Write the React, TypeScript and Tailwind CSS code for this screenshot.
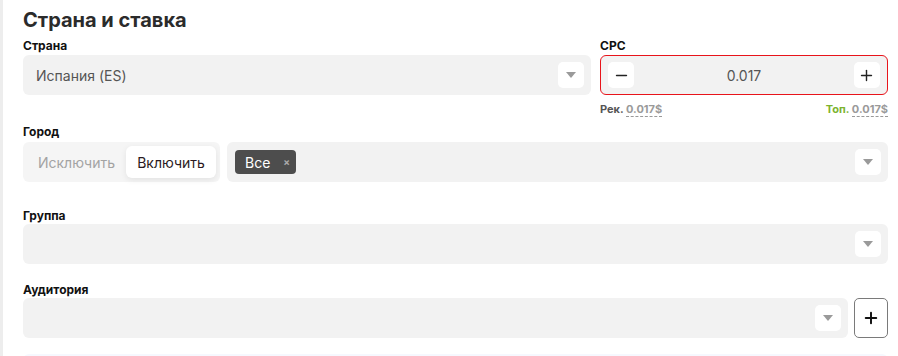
import { Minus, Plus } from "lucide-react";

const font = { fontFamily: "Inter, 'Noto Sans', sans-serif" };

function Caret() {
  return (
    <span className="flex h-[26px] w-[26px] items-center justify-center rounded-[5px] bg-white">
      <svg width="10" height="6" viewBox="0 0 10 6">
        <path d="M0 0h10L5 6z" fill="#9a9a9a" />
      </svg>
    </span>
  );
}

function Label({ children, className = "" }: { children: React.ReactNode; className?: string }) {
  return <div className={`h-4 text-[12px] leading-4 font-bold text-[#111] ${className}`}>{children}</div>;
}

function Select({ children, className = "" }: { children?: React.ReactNode; className?: string }) {
  return (
    <div className={`flex h-10 items-center rounded-[6px] bg-[#f2f2f2] pr-[7px] ${className}`}>
      <div className="flex min-w-0 flex-1 items-center">{children}</div>
      <Caret />
    </div>
  );
}

export default function App() {
  return (
    <div className="flex h-[356px] w-[898px] overflow-hidden bg-white" style={font}>
      <div className="w-[3px] shrink-0 bg-[#ededed]" />
      <div className="flex-1 pl-5 pr-[10px]">
        <h2 className="mt-2 h-6 text-[20px] leading-6 font-bold text-[#2b2b2b]">Страна и ставка</h2>

        <div className="mt-[6px] grid grid-cols-[568px_1fr] gap-x-[9px]">
          <div>
            <Label>Страна</Label>
            <Select className="mt-px">
              <span className="pl-[13px] text-[14px] text-[#555]">Испания (ES)</span>
            </Select>
          </div>
          <div>
            <Label>CPC</Label>
            <div className="mt-px flex h-10 items-center justify-between rounded-[6px] border border-[#e8141b] bg-[#f2f2f2] px-[7px]">
              <span className="flex h-[26px] w-[26px] items-center justify-center rounded-[5px] bg-white">
                <Minus size={17} strokeWidth={2} color="#222" />
              </span>
              <span className="text-[14px] text-[#555]">0.017</span>
              <span className="flex h-[26px] w-[26px] items-center justify-center rounded-[5px] bg-white">
                <Plus size={17} strokeWidth={2} color="#222" />
              </span>
            </div>
            <div className="mt-[6px] flex justify-between text-[11px] leading-4 font-bold">
              <span>
                <span className="text-[#555]">Рек. </span>
                <span className="border-b border-dashed border-[#999] text-[#9a9a9a]">0.017$</span>
              </span>
              <span>
                <span className="text-[#7cb32e]">Топ. </span>
                <span className="border-b border-dashed border-[#999] text-[#9a9a9a]">0.017$</span>
              </span>
            </div>
          </div>
        </div>

        <Label className="mt-[7px]">Город</Label>
        <div className="mt-[2px] flex gap-[7px]">
          <div className="flex h-10 w-[197px] items-center rounded-[6px] bg-[#f5f5f5] px-1">
            <span className="flex-1 text-center text-[14px] text-[#a3a3a3]">Исключить</span>
            <span className="flex h-8 w-[90px] items-center justify-center rounded-[6px] bg-white text-[14px] text-[#2a1a22] shadow-[0_2px_6px_rgba(0,0,0,0.08)]">
              Включить
            </span>
          </div>
          <Select className="flex-1">
            <span className="ml-2 flex h-6 w-[61px] items-center gap-[13px] rounded-[4px] bg-[#4d4d4d] pl-[10px] text-[14px] text-white">
              Все
              <span className="text-[10px] font-bold text-[#aaa]">×</span>
            </span>
          </Select>
        </div>

        <Label className="mt-[26px]">Группа</Label>
        <Select className="mt-0" />

        <Label className="mt-[18px]">Аудитория</Label>
        <div className="flex gap-[6px]">
          <Select className="flex-1" />
          <span className="flex h-10 w-[34px] items-center justify-center rounded-[5px] border border-[#7a7a7a] bg-white">
            <Plus size={18} strokeWidth={2.6} color="#111" />
          </span>
        </div>

        <div className="mt-4 h-10 rounded-[6px] bg-[#f6f8fe]" />
      </div>
    </div>
  );
}
